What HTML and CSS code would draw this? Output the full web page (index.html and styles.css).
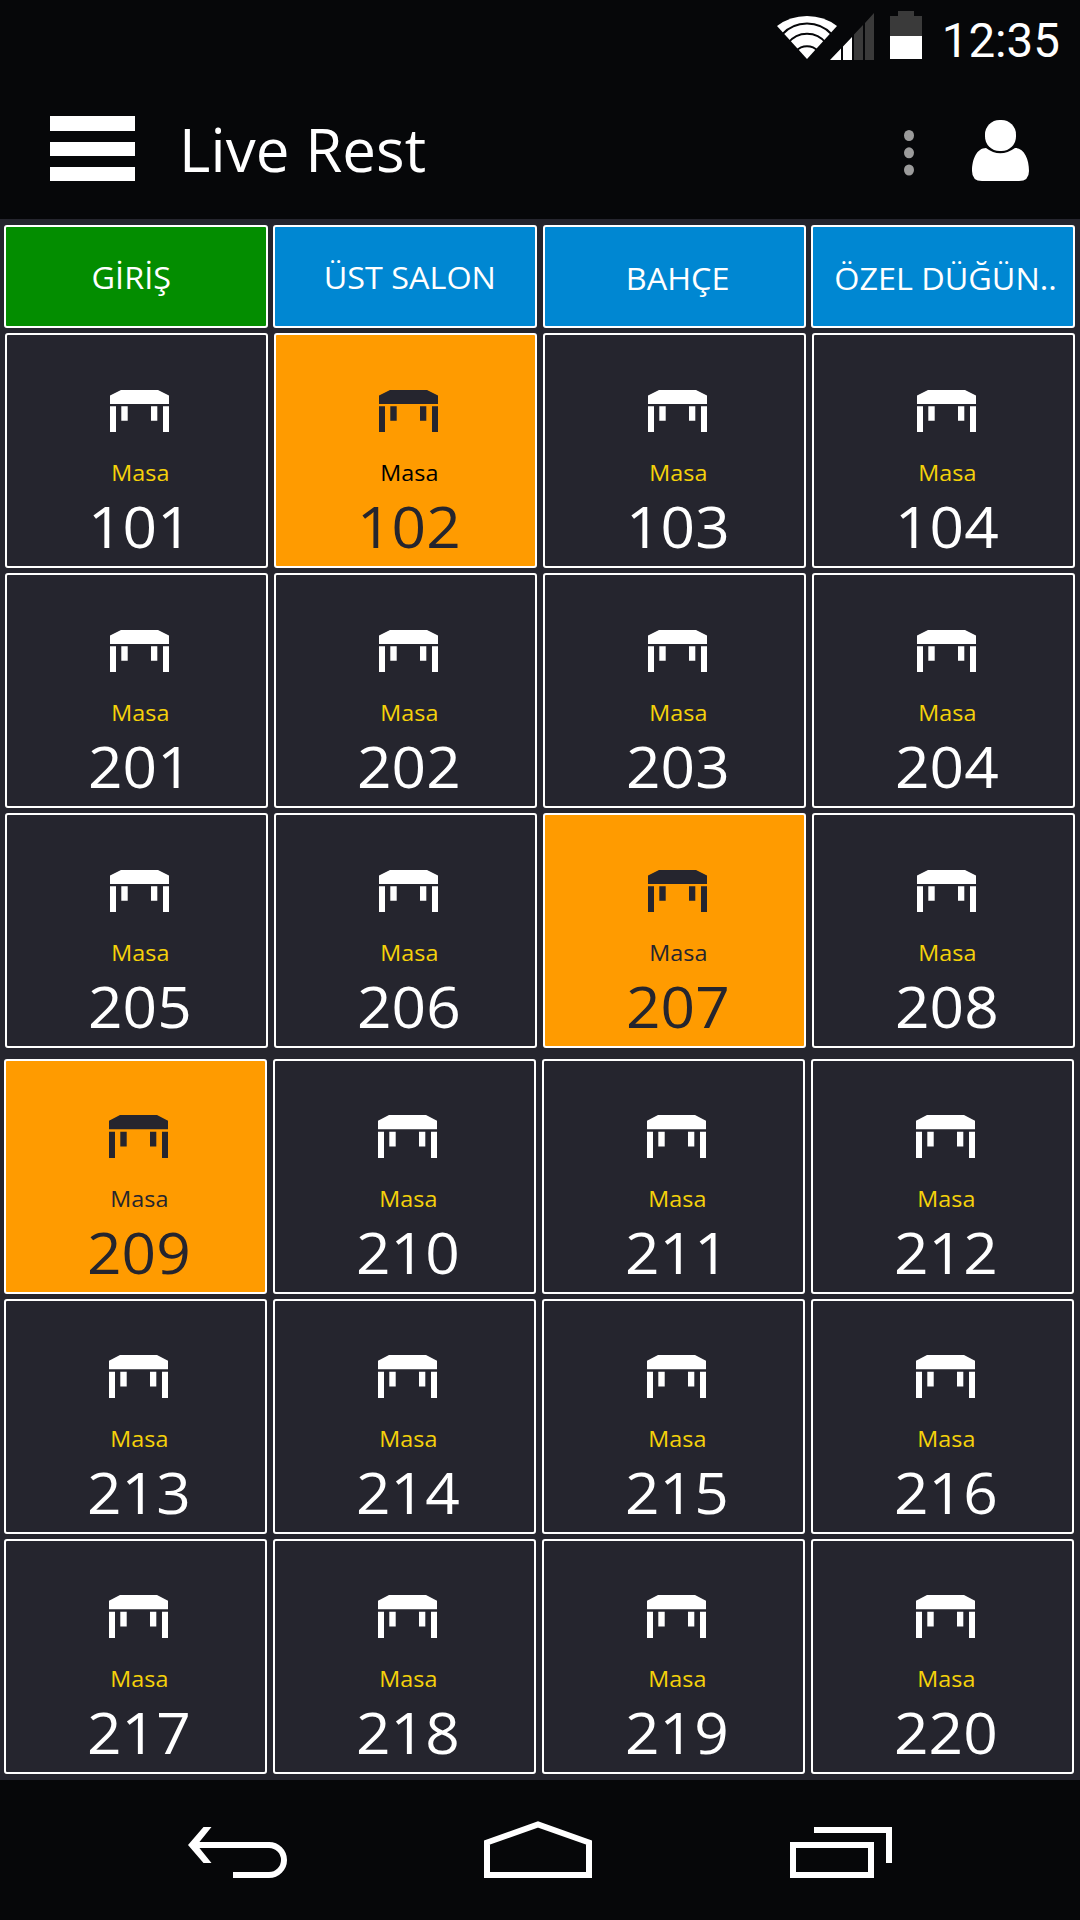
FILE: index.html
```
<!DOCTYPE html>
<html lang="tr">
<head>
    <meta charset="UTF-8">
    <title>Live Rest</title>
    <link rel="stylesheet" href="styles.css">
</head>
<body>
    <div class="top">
        <div class="status-bar">
            <svg class="wifi" width="62" height="45" viewBox="0 0 62 45">
                <path d="M31 44 L1 11 Q14 1 31 1 Q48 1 61 11 Z" fill="#fff"/>
                <g fill="none" stroke="#060709" stroke-width="2">
                    <path d="M6 19.5 A34 34 0 0 1 56 19.5"/>
                    <path d="M12 28 A24 24 0 0 1 50 28"/>
                    <path d="M20 36 A15 15 0 0 1 42 36"/>
                </g>
            </svg>
            <svg class="signal" width="44" height="47" viewBox="0 0 44 47">
                <path d="M0 47 L11 35.5 V47 Z M13 33.5 L22 24 V47 H13 Z" fill="#fff"/>
                <path d="M24 21.5 L33 12 V47 H24 Z M35 10 L44 0 V47 H35 Z" fill="#3a3a3a"/>
            </svg>
            <svg class="battery" width="32" height="48" viewBox="0 0 32 48">
                <path d="M8 0 H24 V5 H32 V25 H0 V5 H8 Z" fill="#3a3a3a"/>
                <rect y="25" width="32" height="23" fill="#fff"/>
            </svg>
            <span class="clock">12:35</span>
        </div>
        <div class="app-bar">
            <div class="menu-button">
                <span></span>
                <span></span>
                <span></span>
            </div>
            <h1>Live Rest</h1>
            <svg class="more" width="10" height="46" viewBox="0 0 10 46" fill="#9b9b9b">
                <ellipse cx="5" cy="5.5" rx="5" ry="5.5"/>
                <ellipse cx="5" cy="22.8" rx="5" ry="5.5"/>
                <ellipse cx="5" cy="40" rx="5" ry="5.5"/>
            </svg>
            <svg class="user" width="57" height="61" viewBox="0 0 57 61" fill="#fff">
                <rect x="13" y="0" width="31" height="31" rx="14.5"/>
                <path d="M14 28 Q28 38.500 43 28 C52 28 57 39 57 51 Q57 61 47 61 H10 Q0 61 0 51 C0 39 5 28 14 28 Z"/>
            </svg>
        </div>
    </div>

    <div class="content">
        <div class="tabs">
            <div class="tab active"><span>GİRİŞ</span></div>
            <div class="tab"><span>ÜST SALON</span></div>
            <div class="tab"><span>BAHÇE</span></div>
            <div class="tab"><span>ÖZEL DÜĞÜN..</span></div>
        </div>
        <div class="tables" id="tables-front"></div>
        <div class="tables tables-back" id="tables-back"></div>
    </div>

    <div class="nav-bar">
        <svg class="nav-back" width="100" height="52" viewBox="0 0 100 52">
            <path d="M15.500 0 H23.500 L9 18 L23.500 36 H15.500 L0 18 Z" fill="#fff"/>
            <path d="M4 18 H81 A15 15 0 0 1 81 48 H45" fill="none" stroke="#fff" stroke-width="6"/>
        </svg>
        <svg class="nav-home" width="108" height="57" viewBox="0 0 108 57">
            <path d="M3 21.500 V54 H105 V21.500 L54 3.500 Z" fill="none" stroke="#fff" stroke-width="6"/>
        </svg>
        <svg class="nav-recent" width="102" height="51" viewBox="0 0 102 51">
            <path d="M3 18 H81 V48 H3 Z M24 3 H99 V36" fill="none" stroke="#fff" stroke-width="6"/>
        </svg>
    </div>

    <script>
        var front = [101, 102, 103, 104, 201, 202, 203, 204, 205, 206, 207, 208];
        var back = [209, 210, 211, 212, 213, 214, 215, 216, 217, 218, 219, 220];
        var busy = [102, 207, 209];

        var icon = '<svg class="table-icon" viewBox="0 0 59 42" preserveAspectRatio="none">' +
            '<path d="M0 5.500 L11 0 H48 L59 5.500 V14 H0 Z M0 16.300 H6 V42 H0 Z M53 16.300 H59 V42 H53 Z ' +
            'M11.300 16.300 H17.700 V30.700 H11.300 Z M41 16.300 H47.300 V30.700 H41 Z"/></svg>';

        function drawTables(id, numbers) {
            document.getElementById(id).innerHTML = numbers.map(function (n) {
                var cls = 'table-card';
                if (busy.indexOf(n) !== -1) cls += ' busy';
                if (n === 102) cls += ' selected';
                return '<div class="' + cls + '">' + icon +
                    '<span class="label">Masa</span>' +
                    '<span class="number">' + n + '</span></div>';
            }).join('');
        }

        drawTables('tables-front', front);
        drawTables('tables-back', back);
    </script>
</body>
</html>
```
FILE: styles.css
```
:root {
    --bar-color: #060709;
    --background-color: #25252e;
    --tab-color: #0087d2;
    --active-color: #038d00;
    --busy-color: #ff9b00;
    --label-color: #f5d20a;
}

* {
    margin: 0;
    padding: 0;
    box-sizing: border-box;
}

body {
    width: 1080px;
    height: 1920px;
    overflow: hidden;
    display: flex;
    flex-direction: column;
    font-family: 'Open Sans', 'Noto Sans', sans-serif;
    color: #fff;
    background-color: var(--background-color);
}

svg {
    display: block;
    flex: none;
}

.top {
    height: 219px;
    background-color: var(--bar-color);
}

.status-bar {
    height: 84px;
    display: flex;
    justify-content: flex-end;
    align-items: flex-start;
    padding-right: 20px;
}

.wifi {
    margin-top: 15px;
    margin-right: -8px;
}

.signal {
    margin-top: 13px;
}

.battery {
    margin: 11px 0 0 16px;
}

.clock {
    width: 138px;
    font-family: Roboto, sans-serif;
    font-size: 47.5px;
    line-height: 56px;
    margin-top: 13px;
    text-align: right;
}

.app-bar {
    height: 135px;
    display: flex;
    align-items: flex-start;
    padding: 0 51px 0 50.4px;
}

.menu-button {
    width: 84.6px;
    margin-top: 32.3px;
    display: flex;
    flex-direction: column;
    gap: 11px;
}

.menu-button span {
    height: 14.4px;
    background-color: #fff;
}

.app-bar h1 {
    flex: 1;
    margin: 25px 0 0 44px;
    font-size: 60px;
    font-weight: 400;
    line-height: 80px;
    letter-spacing: 0.1px;
}

.more {
    margin: 46px 58px 0 0;
}

.user {
    margin-top: 36px;
}

.content {
    flex: 1;
    padding-top: 6px;
}

.tabs {
    display: grid;
    grid-template-columns: repeat(4, 264px);
    gap: 5px;
    padding-left: 4px;
    margin-bottom: 5px;
}

.tab {
    height: 103px;
    border: 2px solid #fff;
    border-radius: 3px;
    background-color: var(--tab-color);
    font-size: 30.4px;
    line-height: 101px;
    text-align: center;
    white-space: nowrap;
    padding-left: 6px;
}

.tab span {
    display: inline-block;
    transform: scaleX(1.065);
}

.tab.active {
    background-color: var(--active-color);
    padding: 0 10px 0 0;
}

.tab:nth-child(2) {
    padding-left: 9px;
}

.tab:nth-child(3) {
    margin-left: 1px;
}

.tab:nth-child(4) {
    padding-left: 4px;
}

.tab:nth-child(n+3) {
    line-height: 103px;
}

.tables {
    display: grid;
    grid-template-columns: repeat(4, 263px);
    grid-auto-rows: 235px;
    gap: 5px 6px;
    padding-left: 5px;
}

.tables-back {
    margin-top: 11px;
    padding-left: 4px;
}

.table-card {
    border: 2px solid #fff;
    border-radius: 3px;
    display: flex;
    flex-direction: column;
    align-items: center;
    padding: 55px 0 0 6px;
}

.table-icon {
    width: 59px;
    height: 42px;
    fill: #fff;
}

.tables-back .table-icon {
    height: 43px;
    margin-top: -1px;
}

.label {
    margin: 25px 0 0 1px;
    font-size: 22px;
    line-height: 30px;
    color: var(--label-color);
    transform: scaleX(1.06);
}

.number {
    margin-top: 4px;
    font-size: 57px;
    line-height: 70px;
    transform: scaleX(1.06);
}

.busy {
    background-color: var(--busy-color);
    color: var(--background-color);
}

.busy .table-icon {
    fill: var(--background-color);
}

.busy .label {
    color: var(--background-color);
}

.selected .label {
    color: #000;
}

.nav-bar {
    height: 140px;
    display: flex;
    align-items: flex-start;
    background-color: var(--bar-color);
}

.nav-back {
    margin: 47px 0 0 188px;
}

.nav-home {
    margin: 41px 0 0 196px;
}

.nav-recent {
    margin: 47px 0 0 198px;
}
```
